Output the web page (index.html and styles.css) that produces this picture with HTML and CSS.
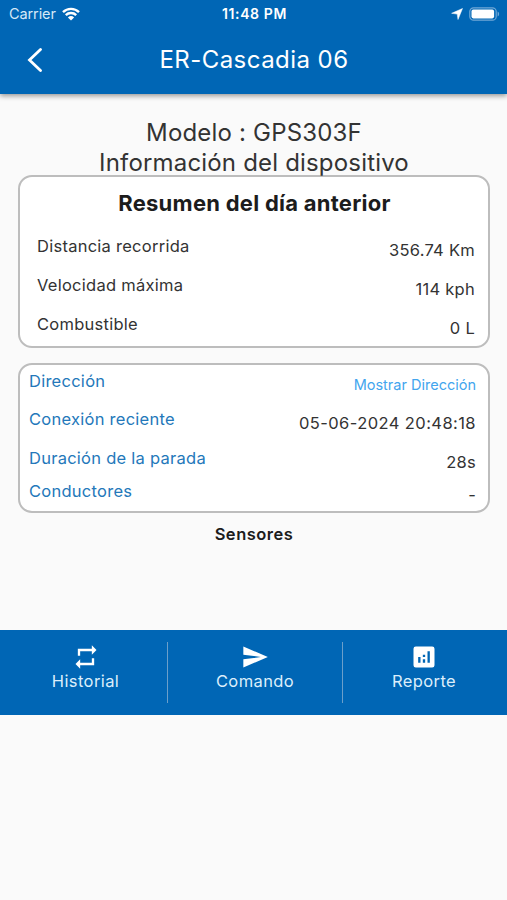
FILE: index.html
```html
<!DOCTYPE html>
<html lang="es">

<head>
    <meta charset="UTF-8">
    <meta name="viewport" content="width=device-width, initial-scale=1.0">
    <title>ER-Cascadia 06</title>
    <link rel="stylesheet" href="styles.css">
</head>

<body>
    <header class="header">
        <div class="status-bar">
            <div class="status-left">
                <span class="carrier">Carrier</span>
                <svg class="wifi" viewBox="0 0 18 14">
                    <path d="M1 5.2a11.4 11.4 0 0 1 16 0M3.8 8.1a7.4 7.4 0 0 1 10.4 0" />
                    <path class="solid" d="M9 13.6 5.9 10.4a4.5 4.5 0 0 1 6.2 0z" />
                </svg>
            </div>
            <span class="time">11:48 PM</span>
            <div class="status-right">
                <svg class="location" viewBox="0 0 12 12">
                    <path d="M11.500.500 7 11.500 6.200 6.100.6 5.300z" />
                </svg>
                <svg class="battery" viewBox="0 0 31 14">
                    <rect class="shell" x=".8" y=".8" width="26.4" height="12.4" rx="3.8" />
                    <rect class="charge" x="2.5" y="2.6" width="22.6" height="8.8" rx="1.8" />
                    <path class="tip" d="M28.6 4.500c2 .8 2 4.200 0 5z" />
                </svg>
            </div>
        </div>
        <div class="title-bar">
            <svg class="back" viewBox="0 0 16 24">
                <path d="M13.500 1.500 2.500 12l11 10.500" />
            </svg>
            <h1 class="title">ER-Cascadia 06</h1>
        </div>
    </header>

    <main class="content">
        <p class="model">Modelo : GPS303F</p>
        <p class="info">Información del dispositivo</p>

        <section class="card summary">
            <h2 class="card-title">Resumen del día anterior</h2>
            <div class="row"><span>Distancia recorrida</span><span class="value">356.74 Km</span></div>
            <div class="row"><span>Velocidad máxima</span><span class="value">114 kph</span></div>
            <div class="row"><span>Combustible</span><span class="value">0 L</span></div>
        </section>

        <section class="card details">
            <div class="row"><span class="label">Dirección</span><a class="value link">Mostrar Dirección</a></div>
            <div class="row tall"><span class="label">Conexión reciente</span><span class="value date">05-06-2024 20:48:18</span></div>
            <div class="row short"><span class="label">Duración de la parada</span><span class="value">28s</span></div>
            <div class="row short"><span class="label">Conductores</span><span class="value">-</span></div>
        </section>

        <h3 class="sensors">Sensores</h3>
    </main>

    <nav class="actions">
        <div class="action history">
            <svg class="icon" viewBox="0 0 24 24">
                <path d="M7 7h10v3l4-4-4-4v3H5v6h2zm10 10H7v-3l-4 4 4 4v-3h12v-6h-2z" />
            </svg>
            <span>Historial</span>
        </div>
        <div class="divider"></div>
        <div class="action">
            <svg class="icon" viewBox="0 0 24 24">
                <path d="M2 21 23 12 2 3v7l15 2-15 2z" />
            </svg>
            <span>Comando</span>
        </div>
        <div class="divider"></div>
        <div class="action report">
            <svg class="icon" viewBox="0 0 24 24">
                <path fill-rule="evenodd" d="M5 3h14a2 2 0 0 1 2 2v14a2 2 0 0 1-2 2H5a2 2 0 0 1-2-2V5a2 2 0 0 1 2-2zM7 12v5h2v-5zM11 10v2h2v-2zM11 14v3h2v-3zM15 7v10h2V7z" />
            </svg>
            <span>Reporte</span>
        </div>
    </nav>
</body>

</html>
```
FILE: styles.css
```css
* {
    box-sizing: border-box;
}

body {
    margin: 0;
    background-color: #fafafa;
    font-family: Inter, "Liberation Sans", sans-serif;
    color: #333;
}

h1,
h2,
h3,
p {
    margin: 0;
}

svg {
    display: block;
}

.header {
    height: 94px;
    background-color: #0066b5;
    color: #fff;
    box-shadow: 0 2px 5px rgba(0, 0, 0, 0.4);
}

.status-bar {
    display: grid;
    grid-template-columns: 1fr auto 1fr;
    align-items: center;
    height: 27px;
    padding: 0 7px 0 9px;
}

.status-left,
.status-right {
    display: flex;
    align-items: center;
    gap: 6px;
}

.status-right {
    justify-content: flex-end;
}

.carrier {
    font-size: 14.5px;
    letter-spacing: -0.1px;
    color: #d5e9f7;
}

.wifi {
    width: 18px;
    height: 14px;
    fill: none;
    stroke: #fff;
    stroke-width: 2.4;
}

.wifi .solid {
    fill: #fff;
    stroke: none;
}

.time {
    font-size: 14px;
    font-weight: 600;
    letter-spacing: 0.6px;
}

.location {
    width: 12px;
    height: 12px;
    fill: #fff;
    stroke: #fff;
    stroke-width: 0.5;
}

.battery {
    width: 31px;
    height: 14px;
}

.battery .shell {
    fill: none;
    stroke: #70a8d6;
    stroke-width: 1.2;
}

.battery .charge {
    fill: #fff;
}

.battery .tip {
    fill: #70a8d6;
}

.title-bar {
    display: grid;
    grid-template-columns: 56px 1fr 55px;
    align-items: center;
    height: 65px;
}

.back {
    width: 16px;
    height: 24px;
    margin-left: 27px;
    fill: none;
    stroke: #fff;
    stroke-width: 2.8;
    stroke-linecap: round;
}

.title {
    text-align: center;
    font-size: 24px;
    font-weight: 400;
    letter-spacing: 0.45px;
}

.content {
    height: 536px;
    padding: 24px 17px 0 18px;
}

.model,
.info {
    text-align: center;
    font-size: 24px;
    line-height: 29px;
    letter-spacing: 0.18px;
}

.info {
    padding-top: 1px;
    margin-bottom: -2px;
}

.card {
    border: 2px solid #bdbdbd;
    border-radius: 14px;
    background-color: #fff;
    font-size: 16.5px;
    letter-spacing: 0.26px;
}

.summary {
    height: 173px;
    padding: 11px 13px 0 17px;
}

.card-title {
    margin: 0 3px 16px 0;
    text-align: center;
    font-size: 22px;
    line-height: 30px;
    font-weight: 700;
    color: #1c1c1c;
}

.row {
    display: flex;
    justify-content: space-between;
    height: 39px;
    line-height: 24px;
}

.value {
    padding-top: 4px;
}

.details {
    height: 150px;
    margin-top: 15px;
    padding: 4px 12px 0 9px;
}

.details .row {
    height: 38px;
}

.details .row.tall {
    height: 39px;
}

.details .row.short {
    height: 33px;
}

.label {
    color: #2478ba;
}

.date {
    letter-spacing: 0.42px;
}

.link {
    font-size: 14.5px;
    letter-spacing: 0;
    color: #42a5ee;
}

.sensors {
    margin-top: 9px;
    text-align: center;
    font-size: 16.5px;
    line-height: 24px;
    font-weight: 600;
    letter-spacing: 0.5px;
    color: #1c1c1c;
}

.actions {
    display: grid;
    grid-template-columns: 167px 1px 174px 1px 1fr;
    height: 85px;
    padding: 12px 0;
    background-color: #0066b5;
    color: #dceefb;
    font-size: 16.5px;
    line-height: 22px;
    letter-spacing: 0.4px;
}

.action {
    display: flex;
    flex-direction: column;
    align-items: center;
}

.history {
    padding-left: 4px;
}

.report {
    padding-right: 2px;
}

.icon {
    width: 28px;
    height: 28px;
    margin-top: 1px;
    margin-bottom: -1px;
    fill: #fff;
}

.divider {
    background-color: #6b9fca;
}
```
